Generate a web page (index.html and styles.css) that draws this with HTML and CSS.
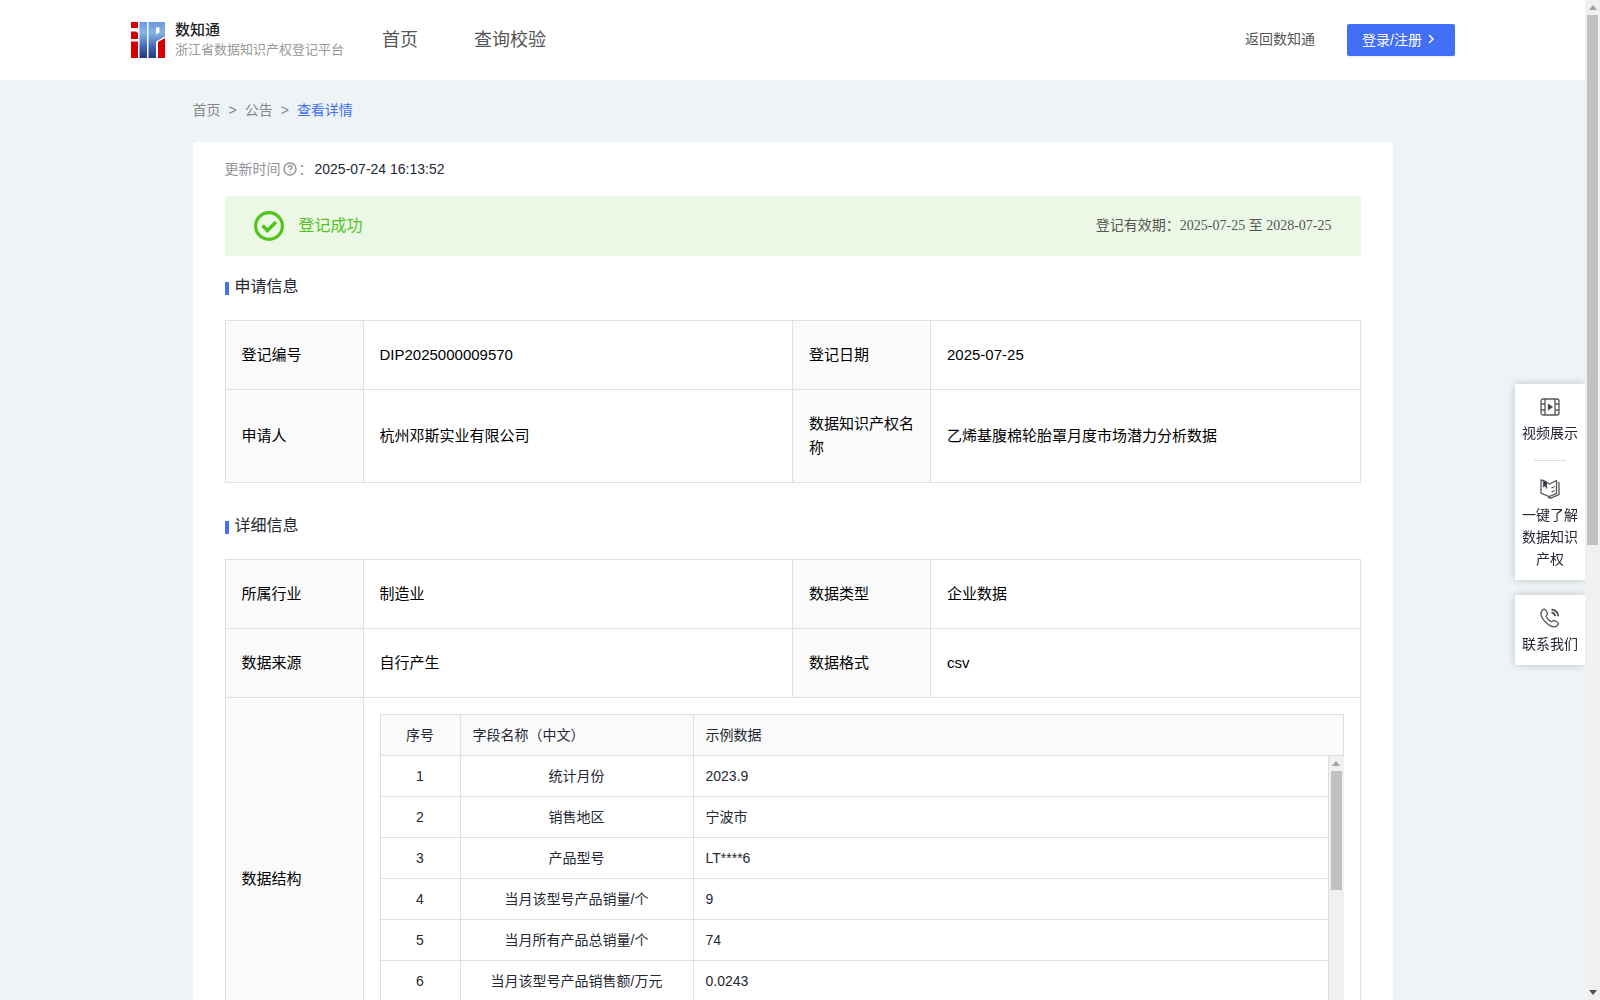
FILE: index.html
```html
<!DOCTYPE html>
<html lang="zh-CN">
<head>
    <meta charset="UTF-8">
    <meta name="viewport" content="width=device-width, initial-scale=1.0">
    <title>数知通 - 查看详情</title>
    <link rel="stylesheet" href="styles.css">
</head>
<body>
    <div class="page">
        <header class="header">
            <a class="brand" href="#">
                <svg class="logo" viewBox="0 0 34 36" aria-hidden="true">
                    <defs>
                        <linearGradient id="blue" x1="0" y1="0" x2="0" y2="36" gradientUnits="userSpaceOnUse">
                            <stop offset="0" stop-color="#6a9ae0"/>
                            <stop offset="0.3" stop-color="#86b4e6"/>
                            <stop offset="0.7" stop-color="#3f66b0"/>
                            <stop offset="1" stop-color="#233a80"/>
                        </linearGradient>
                    </defs>
                    <path fill="#d40000" d="M0 0h7v6H0zM0 9.500h5l2 1.500v6H0zM0 19.500h7V36H0zM27 20l7-4v20h-7z"/>
                    <path fill="url(#blue)" d="M8.500 0h7.500v36H8.500zM17.500 0H34v14.500l-9 5V36h-7.500zM25 5.500v7l3.500-2v-5z" fill-rule="evenodd"/>
                </svg>
                <span class="brand-text">
                    <strong>数知通</strong>
                    <small>浙江省数据知识产权登记平台</small>
                </span>
            </a>
            <nav class="nav">
                <a href="#">首页</a>
                <a href="#">查询校验</a>
            </nav>
            <a class="back" href="#">返回数知通</a>
            <button class="login" type="button">登录/注册
                <svg viewBox="0 0 8 10" aria-hidden="true"><path d="M2 1l4 4-4 4" fill="none" stroke="#fff" stroke-width="1.6"/></svg>
            </button>
        </header>

        <main class="main">
            <nav class="crumbs">
                <a href="#">首页</a>
                <span>&gt;</span>
                <a href="#">公告</a>
                <span>&gt;</span>
                <a class="current" href="#">查看详情</a>
            </nav>

            <div class="card">
                <div class="update">
                    <span class="update-label">更新时间</span>
                    <svg viewBox="0 0 14 14" aria-hidden="true">
                        <circle cx="7" cy="7" r="6" fill="none" stroke="#909399" stroke-width="1.4"/>
                        <path d="M5.1 5.6c0-2.5 3.9-2.4 3.9 0 0 1.3-2 1.3-2 2.7M7 9.4v1.3" fill="none" stroke="#909399" stroke-width="1.4"/>
                    </svg>
                    <span class="update-label">：</span>
                    <time>2025-07-24 16:13:52</time>
                </div>

                <div class="status">
                    <svg viewBox="0 0 30 30" aria-hidden="true">
                        <circle cx="15" cy="15" r="13.4" fill="none" stroke="#52c41a" stroke-width="3.2"/>
                        <path d="M8.5 14.5l5 5 8.5-8.5" fill="none" stroke="#52c41a" stroke-width="3.6"/>
                    </svg>
                    <span class="status-name">登记成功</span>
                    <span class="validity">登记有效期：2025-07-25 至 2028-07-25</span>
                </div>

                <h2 class="title">申请信息</h2>
                <table class="info">
                    <colgroup><col class="c-label"><col><col class="c-label"><col></colgroup>
                    <tr>
                        <th>登记编号</th><td>DIP2025000009570</td>
                        <th>登记日期</th><td>2025-07-25</td>
                    </tr>
                    <tr class="tall">
                        <th>申请人</th><td>杭州邓斯实业有限公司</td>
                        <th>数据知识产权名称</th><td>乙烯基腹棉轮胎罩月度市场潜力分析数据</td>
                    </tr>
                </table>

                <h2 class="title">详细信息</h2>
                <table class="info">
                    <colgroup><col class="c-label"><col><col class="c-label"><col></colgroup>
                    <tr>
                        <th>所属行业</th><td>制造业</td>
                        <th>数据类型</th><td>企业数据</td>
                    </tr>
                    <tr>
                        <th>数据来源</th><td>自行产生</td>
                        <th>数据格式</th><td>csv</td>
                    </tr>
                    <tr>
                        <th>数据结构</th>
                        <td colspan="3" class="nested">
                            <table class="fields fields-head">
                                <colgroup><col class="c-no"><col class="c-name"><col></colgroup>
                                <tr><th>序号</th><th>字段名称（中文）</th><th>示例数据</th></tr>
                            </table>
                            <div class="fields-body">
                                <table class="fields">
                                    <colgroup><col class="c-no"><col class="c-name"><col></colgroup>
                                    <tr><td>1</td><td>统计月份</td><td>2023.9</td></tr>
                                    <tr><td>2</td><td>销售地区</td><td>宁波市</td></tr>
                                    <tr><td>3</td><td>产品型号</td><td>LT****6</td></tr>
                                    <tr><td>4</td><td>当月该型号产品销量/个</td><td>9</td></tr>
                                    <tr><td>5</td><td>当月所有产品总销量/个</td><td>74</td></tr>
                                    <tr><td>6</td><td>当月该型号产品销售额/万元</td><td>0.0243</td></tr>
                                </table>
                                <div class="scrollbar" aria-hidden="true">
                                    <i class="arrow-up"></i>
                                    <i class="thumb thumb-fields"></i>
                                </div>
                            </div>
                        </td>
                    </tr>
                </table>
            </div>
        </main>
    </div>

    <div class="scrollbar" aria-hidden="true">
        <i class="arrow-up"></i>
        <i class="thumb thumb-page"></i>
        <i class="arrow-down"></i>
    </div>

    <aside class="side">
        <div class="side-box">
            <a href="#">
                <svg viewBox="0 0 20 20" aria-hidden="true" fill="none" stroke="#55565e" stroke-width="1.3">
                    <rect x="1" y="2" width="18" height="16" rx="2"/>
                    <path d="M5 2v16M15 2v16M1 7h4M1 13h4M15 7h4M15 13h4"/>
                    <path d="M8.5 7.5l3.500 2.500-3.500 2.500z" fill="#2a2b35"/>
                </svg>
                视频展示
            </a>
            <hr>
            <a href="#">
                <svg viewBox="0 0 20 20" aria-hidden="true" fill="none" stroke="#55565e" stroke-width="1.3">
                    <path d="M3 1.500L1 1v13l8 3.500 7.500-3V1.500L9.500 5 7 3.500M18 3.500l1 .5v11.500L11 19l-3-.5"/>
                    <path d="M11.500 9l3-1.500M11.500 13l3-1.500"/>
                    <path d="M3.500 1.500v6L5 6.500l1.500 2V3z" fill="#2a2b35"/>
                </svg>
                一键了解数据知识产权
            </a>
        </div>
        <div class="side-box">
            <a href="#">
                <svg viewBox="0 0 20 20" aria-hidden="true" fill="none" stroke="#55565e" stroke-width="1.3">
                    <path d="M2.500 2C0 5 1 9.500 5.500 14c4.500 4.500 9 6 12 3.500 1.500-1.500 1-2.500-.5-3.500l-2-1.200c-2-1.200-2.400 1.200-3.600.8-1.800-.6-4.700-3.400-5.200-5.200-.3-1.200 2-1.500 1.100-3.400L6 2.500C5 1 4 .8 2.500 2z"/>
                    <path d="M11.500 4.500c2 .3 3.400 1.700 3.700 3.700M11.500 1.500c3.800.3 6.400 2.900 6.700 6.700" stroke-width="1.800"/>
                </svg>
                联系我们
            </a>
        </div>
    </aside>
</body>
</html>
```
FILE: styles.css
```css
* {
    margin: 0;
    padding: 0;
    box-sizing: border-box;
}
body {
    display: flex;
    height: 100vh;
    overflow: hidden;
    font-family: "Liberation Sans", "Noto Sans CJK SC", sans-serif;
    font-size: 14px;
    color: #252733;
    background: #eef3f6;
}
a {
    color: inherit;
    text-decoration: none;
}
svg {
    display: block;
    flex: none;
}
.page {
    flex: 1;
    overflow: hidden;
}

/* header */
.header {
    display: flex;
    align-items: center;
    height: 80px;
    padding: 0 130px;
    background: #fff;
    color: #555;
}
.brand {
    display: flex;
    align-items: center;
    gap: 9px;
}
.logo {
    width: 36px;
    height: 36px;
}
.brand-text {
    display: flex;
    flex-direction: column;
}
.brand-text strong {
    font-size: 15px;
    line-height: 20px;
    font-weight: 500;
    color: #222;
}
.brand-text small {
    font-size: 13px;
    line-height: 20px;
    color: #999;
}
.nav {
    display: flex;
    flex: 1;
    gap: 56px;
    margin-left: 38px;
    padding-bottom: 4px;
    font-size: 18px;
}
.back {
    padding-bottom: 4px;
}
.login {
    display: flex;
    align-items: center;
    gap: 5px;
    width: 108px;
    height: 32px;
    margin-left: 32px;
    padding: 0 15px 2px;
    border: none;
    border-radius: 2px;
    background: #436ff6;
    color: #fff;
    font: inherit;
    box-shadow: 0 2px 0 rgba(0, 0, 0, 0.05);
    cursor: pointer;
}
.login svg {
    width: 8px;
    height: 10px;
}

/* content */
.main {
    max-width: 1200px;
    margin: 0 auto;
}
.crumbs {
    display: flex;
    align-items: baseline;
    gap: 8px;
    height: 62px;
    padding-top: 20px;
    line-height: 20px;
    color: #888;
}
.crumbs .current {
    color: #436ff6;
}
.card {
    padding: 16px 32px;
    border-radius: 4px;
    background: #fff;
}
.update {
    display: flex;
    align-items: center;
    height: 22px;
    margin-bottom: 16px;
}
.update svg {
    width: 14px;
    height: 14px;
    margin: 0 2px;
}
.update-label {
    padding-bottom: 2px;
    color: #909399;
}
.update time {
    margin-left: 2px;
}
.status {
    display: flex;
    align-items: center;
    height: 60px;
    padding: 0 29px;
    background: #ebf8e6;
}
.status svg {
    width: 30px;
    height: 30px;
}
.status-name {
    flex: 1;
    margin-left: 15px;
    padding-bottom: 4px;
    font-size: 16px;
    color: #52c41a;
}
.validity {
    padding-bottom: 4px;
    font-family: "Liberation Serif", "Noto Sans CJK SC", serif;
    color: #555;
}
.title {
    display: flex;
    align-items: flex-end;
    gap: 6px;
    height: 24px;
    margin: 19px 0 21px;
    font-size: 16px;
    line-height: 24px;
    font-weight: 400;
}
.title::before {
    content: "";
    width: 4px;
    height: 13px;
    margin-bottom: 4px;
    background: #436ff6;
}
.info + .title {
    margin-top: 31px;
}

/* tables */
.info {
    width: 100%;
    table-layout: fixed;
    border-collapse: collapse;
    font-size: 15px;
    line-height: 24px;
    color: #000;
}
.info th,
.info td {
    height: 69px;
    padding: 0 16px;
    border: 1px solid #e0e0e0;
    text-align: left;
    font-weight: 400;
}
.info th {
    background: #fafafa;
}
.info .tall td {
    height: 93px;
}
.c-label {
    width: 138px;
}
.info .nested {
    padding: 16px;
}
.fields {
    width: 100%;
    table-layout: fixed;
    border-collapse: collapse;
    font-size: 14px;
    line-height: 22px;
    color: #252733;
}
.info .fields th,
.info .fields td {
    height: 41px;
    padding: 0 12px;
}
.info .fields td {
    text-align: center;
}
.info .fields th:first-child {
    text-align: center;
}
.info .fields td:last-child {
    text-align: left;
}
.info .fields-body tr:first-child td {
    height: 40px;
    border-top: none;
}
.c-no {
    width: 80px;
}
.c-name {
    width: 233px;
}
.fields-body {
    display: flex;
    height: 287px;
    overflow: hidden;
}
.fields-body .fields {
    align-self: flex-start;
}

/* scrollbars */
.scrollbar {
    display: flex;
    flex-direction: column;
    align-items: center;
    flex: none;
    width: 15px;
    padding: 5px 0;
    background: #f0f0f0;
}
.thumb {
    width: 11px;
    margin-top: 5px;
    background: #c1c1c1;
}
.thumb-fields {
    height: 119px;
}
.thumb-page {
    height: 530px;
}
.arrow-up,
.arrow-down {
    border: 4px solid transparent;
    border-top-width: 0;
    border-bottom: 5px solid #a3a3a3;
}
.arrow-down {
    margin-top: auto;
    border-top: 5px solid #505050;
    border-bottom-width: 0;
}

/* floating links */
.side {
    position: fixed;
    top: 384px;
    right: 15px;
    width: 70px;
    display: flex;
    flex-direction: column;
    gap: 15px;
    line-height: 22px;
    text-align: center;
}
.side-box {
    padding: 13px 7px 10px;
    background: #fff;
    box-shadow: 0 0 8px rgba(0, 0, 0, 0.2);
    clip-path: inset(-10px 0 -10px -10px);
}
.side-box a {
    display: block;
}
.side-box svg {
    width: 20px;
    height: 20px;
    margin: 0 auto 5px;
}
.side-box hr {
    width: 32px;
    margin: 16px auto 18px;
    border: none;
    border-top: 1px solid #ddd;
}
```
